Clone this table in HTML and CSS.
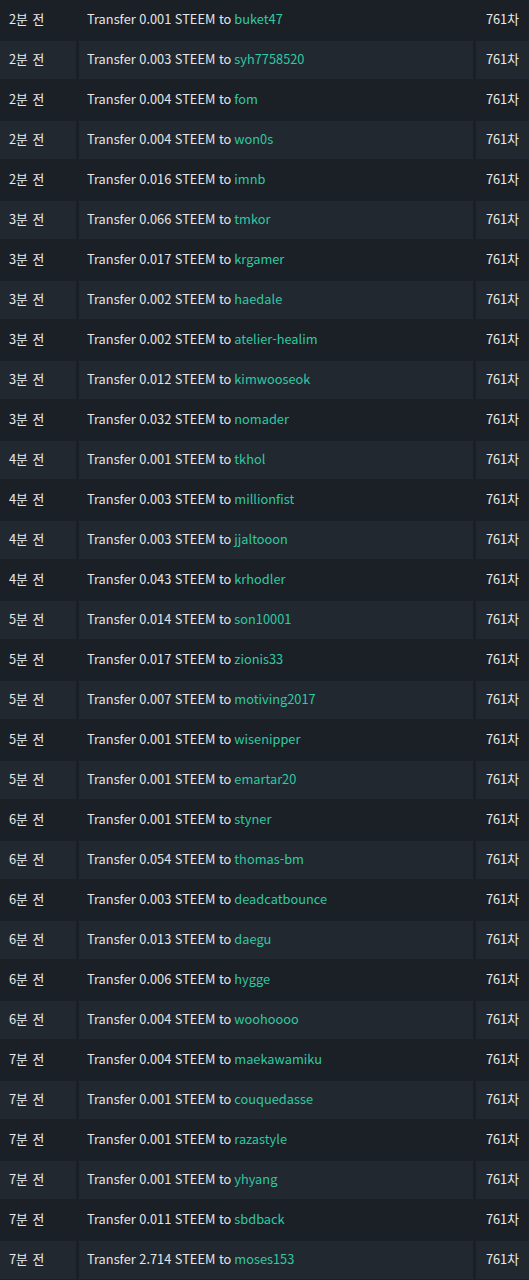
FILE: index.html
```html
<!DOCTYPE html>
<html lang="ko">
<head>
<meta charset="utf-8">
<link rel="stylesheet" href="styles.css">
</head>
<body>
<div class="list" id="list"></div>
<script>
const data = [
["2분 전","0.001","buket47"],["2분 전","0.003","syh7758520"],["2분 전","0.004","fom"],["2분 전","0.004","won0s"],["2분 전","0.016","imnb"],
["3분 전","0.066","tmkor"],["3분 전","0.017","krgamer"],["3분 전","0.002","haedale"],["3분 전","0.002","atelier-healim"],["3분 전","0.012","kimwooseok"],["3분 전","0.032","nomader"],
["4분 전","0.001","tkhol"],["4분 전","0.003","millionfist"],["4분 전","0.003","jjaltooon"],["4분 전","0.043","krhodler"],
["5분 전","0.014","son10001"],["5분 전","0.017","zionis33"],["5분 전","0.007","motiving2017"],["5분 전","0.001","wisenipper"],["5분 전","0.001","emartar20"],
["6분 전","0.001","styner"],["6분 전","0.054","thomas-bm"],["6분 전","0.003","deadcatbounce"],["6분 전","0.013","daegu"],["6분 전","0.006","hygge"],["6분 전","0.004","woohoooo"],
["7분 전","0.004","maekawamiku"],["7분 전","0.001","couquedasse"],["7분 전","0.001","razastyle"],["7분 전","0.001","yhyang"],["7분 전","0.011","sbdback"],["7분 전","2.714","moses153"]
];
const list = document.getElementById('list');
data.forEach(([t, a, u]) => {
  const row = document.createElement('div');
  row.className = 'row';
  row.innerHTML = '<div class="cell time">' + t + '</div>' +
    '<div class="cell desc">Transfer ' + a + ' STEEM to <a class="user">' + u + '</a></div>' +
    '<div class="cell round">761차</div>';
  list.appendChild(row);
});
</script>
</body>
</html>
```
FILE: styles.css
```css
html, body {
  margin: 0;
  padding: 0;
  background: #1b2027;
}
body {
  font-family: "Noto Sans CJK KR", "Noto Sans", sans-serif;
  font-size: 12.8px;
  font-weight: 400;
  color: #e8eaec;
}
.list {
  display: flex;
  flex-direction: column;
}
.row {
  display: grid;
  grid-template-columns: 76px 1fr 53px;
  column-gap: 3px;
  height: 40px;
  padding: 1px 0;
  box-sizing: border-box;
}
.cell {
  display: flex;
  align-items: center;
  white-space: nowrap;
  padding-bottom: 3px;
}
.row:nth-child(even) .cell {
  background: #222830;
}
.time {
  padding-left: 9px;
  word-spacing: 1px;
}
.desc {
  padding-left: 8px;
  color: #e4e6e8;
}
.round {
  justify-content: flex-end;
  padding-right: 10px;
}
.user {
  color: #2fc9a2;
  margin-left: 3px;
}
```
